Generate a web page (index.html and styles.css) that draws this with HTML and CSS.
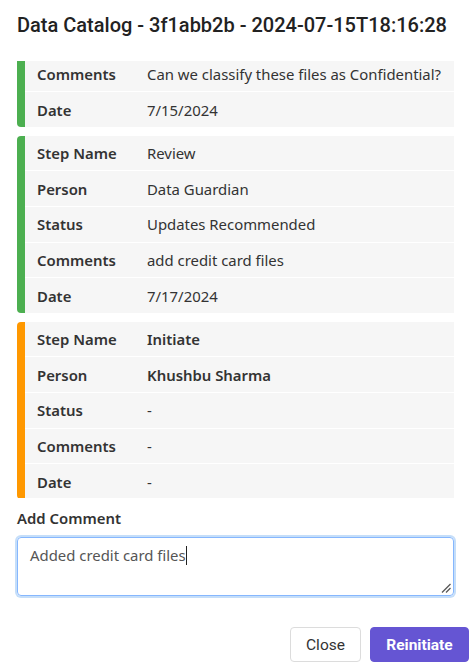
FILE: index.html
```html
<!DOCTYPE html>
<html lang="en">
<head>
<meta charset="utf-8">
<title>Data Catalog</title>
<link rel="stylesheet" href="styles.css">
</head>
<body>
<div class="modal">
  <header class="modal-header">
    <h1 class="title">Data Catalog - 3f1abb2b - 2024-07-15T18:16:28</h1>
  </header>
  <div class="modal-body">
    <div class="scroll">
      <div class="card card-green card-first">
        <div class="row"><span class="label">Comments</span><span class="value">Can we classify these files as Confidential?</span></div>
        <div class="row"><span class="label">Date</span><span class="value">7/15/2024</span></div>
      </div>
      <div class="card card-green">
        <div class="row"><span class="label">Step Name</span><span class="value">Review</span></div>
        <div class="row"><span class="label">Person</span><span class="value">Data Guardian</span></div>
        <div class="row"><span class="label">Status</span><span class="value">Updates Recommended</span></div>
        <div class="row"><span class="label">Comments</span><span class="value">add credit card files</span></div>
        <div class="row"><span class="label">Date</span><span class="value">7/17/2024</span></div>
      </div>
      <div class="card card-orange">
        <div class="row"><span class="label">Step Name</span><span class="value value-strong">Initiate</span></div>
        <div class="row"><span class="label">Person</span><span class="value value-strong">Khushbu Sharma</span></div>
        <div class="row"><span class="label">Status</span><span class="value">-</span></div>
        <div class="row"><span class="label">Comments</span><span class="value">-</span></div>
        <div class="row"><span class="label">Date</span><span class="value">-</span></div>
      </div>
    </div>
    <label class="field-label">Add Comment</label>
    <div class="textarea">
      <span class="textarea-text">Added credit card files</span><span class="caret"></span>
      <svg class="grip" width="10" height="10" viewBox="0 0 10 10" aria-hidden="true">
        <line x1="9.5" y1="1" x2="1" y2="9.5" stroke="#555" stroke-width="1.2"/>
        <line x1="9.5" y1="5" x2="5" y2="9.5" stroke="#555" stroke-width="1.2"/>
      </svg>
    </div>
  </div>
  <footer class="modal-footer">
    <button class="btn btn-secondary" type="button">Close</button>
    <button class="btn btn-primary" type="button">Reinitiate</button>
  </footer>
</div>
</body>
</html>
```
FILE: styles.css
```css
* { box-sizing: border-box; }
html, body { margin: 0; padding: 0; background: #ffffff; }
body {
  font-family: "Noto Sans", "Open Sans", sans-serif;
  color: #333333;
  width: 472px;
  height: 670px;
  overflow: hidden;
}
.modal {
  display: flex;
  flex-direction: column;
  height: 670px;
}
.modal-header {
  padding: 13px 17px 0 17px;
  height: 61px;
}
.title {
  margin: 0;
  font-family: Roboto, "Liberation Sans", sans-serif;
  font-weight: 500;
  font-size: 20px;
  line-height: 24px;
  color: #222222;
  letter-spacing: 0;
  white-space: nowrap;
}
.modal-body {
  padding: 0 18px 0 17px;
}
.scroll {
  height: 437px;
  overflow: hidden;
  display: flex;
  flex-direction: column;
  gap: 9px;
}
.card {
  border-left: 8px solid #4caf50;
  border-radius: 4px 0 0 4px;
  display: flex;
  flex-direction: column;
  gap: 1px;
  background: #ffffff;
  flex: none;
}
.card-first { margin-top: -4.3px; }
.card-green { border-left-color: #4caf50; }
.card-orange { border-left-color: #ff9800; }
.row {
  display: grid;
  grid-template-columns: 110px 1fr;
  align-items: center;
  height: 34.6px;
  padding-left: 12px;
  background: #f6f6f6;
  font-size: 14.9px;
}
.label {
  font-weight: 600;
  color: #333333;
}
.value {
  font-weight: 400;
  color: #333333;
  white-space: nowrap;
}
.value-strong { font-weight: 600; }
.field-label {
  display: block;
  margin-top: 10px;
  font-size: 14.9px;
  font-weight: 600;
  line-height: 20px;
  color: #333333;
}
.textarea {
  position: relative;
  margin-top: 9px;
  height: 59px;
  border: 1px solid #86b7fe;
  border-radius: 4px;
  box-shadow: 0 0 0 2px #c5def9;
  padding: 5px 12px;
  font-size: 14.9px;
  line-height: 24px;
  color: #555555;
}
.caret {
  display: inline-block;
  width: 1.5px;
  height: 19px;
  background: #222222;
  vertical-align: -4px;
}
.grip {
  position: absolute;
  right: 2px;
  bottom: 2px;
}
.modal-footer {
  display: flex;
  justify-content: flex-end;
  gap: 9px;
  padding: 31px 3px 0 0;
}
.btn {
  height: 35px;
  border-radius: 4px;
  font-family: Roboto, "Liberation Sans", sans-serif;
  font-size: 15.5px;
  padding: 0;
  cursor: pointer;
}
.btn-secondary {
  width: 71px;
  background: #ffffff;
  border: 1px solid #dcdcdc;
  color: #333333;
  font-weight: 400;
}
.btn-primary {
  width: 99px;
  background: #6555d3;
  border: 1px solid #6555d3;
  color: #ffffff;
  font-weight: 700;
}
```
